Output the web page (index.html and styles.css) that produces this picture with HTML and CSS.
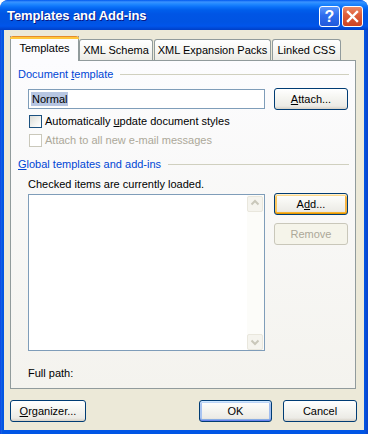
FILE: index.html
```html
<!DOCTYPE html>
<html>
<head>
<meta charset="utf-8">
<link rel="stylesheet" href="styles.css">
</head>
<body>
<div class="window">
  <div class="titlebar">
    <span class="title">Templates and Add-ins</span>
    <div class="tbtn help">?</div>
    <div class="tbtn close">
      <svg width="19" height="19" viewBox="0 0 19 19"><path d="M5 5 L14 14 M14 5 L5 14" stroke="#fff" stroke-width="2.4" stroke-linecap="square"/></svg>
    </div>
  </div>
  <div class="client">
    <div class="tabs">
      <div class="tab sel">Templates</div>
      <div class="tab t2">XML Schema</div>
      <div class="tab t3">XML Expansion Packs</div>
      <div class="tab t4">Linked CSS</div>
    </div>
    <div class="panel">
      <div class="group"><span>Document <u>t</u>emplate</span><i class="rule"></i></div>
      <div class="row-input">
        <div class="input"><span class="selected">Normal</span></div>
        <div class="btn attach"><span><u>A</u>ttach...</span></div>
      </div>
      <div class="check c1"><span class="box"></span><span>Automatically <u>u</u>pdate document styles</span></div>
      <div class="check c2 disabled"><span class="box"></span><span>Attach to all new e-mail messages</span></div>
      <div class="group g2"><span><u>G</u>lobal templates and add-ins</span><i class="rule"></i></div>
      <div class="note">Checked items are currently loaded.</div>
      <div class="row-list">
        <div class="list">
          <div class="sb">
            <div class="arrow"><svg width="14" height="14" viewBox="0 0 14 14"><polyline points="3.5,7.5 7,4 10.5,7.5" fill="none" stroke="#C9C7BA" stroke-width="2"/></svg></div>
            <div class="arrow"><svg width="14" height="14" viewBox="0 0 14 14"><polyline points="3.5,5.5 7,9 10.5,5.5" fill="none" stroke="#C9C7BA" stroke-width="2"/></svg></div>
          </div>
        </div>
        <div class="side">
          <div class="btn focus"><span>A<u>d</u>d...</span></div>
          <div class="btn disabled-btn remove"><span>Remove</span></div>
        </div>
      </div>
      <div class="fullpath">Full path:</div>
    </div>
    <div class="footer">
      <div class="btn organizer"><span><u>O</u>rganizer...</span></div>
      <div class="btn ok default"><span>OK</span></div>
      <div class="btn cancel"><span>Cancel</span></div>
    </div>
  </div>
</div>
</body>
</html>
```

FILE: styles.css
```css
html, body {
  margin: 0;
  padding: 0;
  background: #ffffff;
}
body {
  font-family: "Liberation Sans", Arial, sans-serif;
  font-size: 11px;
  color: #000;
}
.window {
  width: 368px;
  height: 434px;
  box-sizing: border-box;
  display: flex;
  flex-direction: column;
  background: linear-gradient(90deg, #0831D9 0, #166AEE 1px, #0855DD 2px, #0055E5 3px, #0055E5 364px, #0653DE 365px, #0846CF 367px);
  border-radius: 8px 8px 0 0;
  overflow: hidden;
}
.titlebar {
  height: 30px;
  flex: none;
  display: flex;
  align-items: flex-start;
  padding: 0 5px 0 7px;
  background: linear-gradient(180deg, #0058EE 0, #3A93FF 2px, #2088FF 4px, #0A70F8 7px, #005EEB 10px, #0055E5 14px, #0054E3 22px, #0055EB 26px, #004AD9 28px, #003FC6 30px);
  border-radius: 8px 8px 0 0;
}
.title {
  flex: 1;
  margin-top: 8px;
  line-height: 15px;
  font-size: 13px;
  font-weight: bold;
  color: #fff;
  text-shadow: 1px 1px 0 #0A1883;
  letter-spacing: -0.1px;
}
.tbtn {
  width: 21px;
  height: 21px;
  box-sizing: border-box;
  margin-top: 6px;
  border: 1px solid #fff;
  border-radius: 3px;
  display: flex;
  align-items: center;
  justify-content: center;
  color: #fff;
}
.help {
  margin-right: 2px;
  background: linear-gradient(180deg, #5C97FC 0, #2E6CEE 45%, #2259DB 100%);
  font-family: "Liberation Sans", Arial, sans-serif;
  font-weight: bold;
  font-size: 16px;
  line-height: 19px;
}
.close {
  background: linear-gradient(180deg, #EB8A68 0, #DF5F3B 40%, #CD4222 100%);
}
.client {
  flex: 1;
  margin: 0 4px 4px 4px;
  background: #ECE9D8;
  padding: 6px 0 0 6px;
  display: flex;
  flex-direction: column;
}
.tabs {
  display: flex;
  align-items: flex-end;
  height: 24px;
}
.tab {
  box-sizing: border-box;
  height: 21px;
  border: 1px solid #919B9C;
  border-bottom: none;
  border-radius: 3px 3px 0 0;
  background: linear-gradient(180deg, #FFFFFF 0, #F7F7F4 50%, #ECEBE5 100%);
  text-align: center;
  padding-top: 4px;
  line-height: 13px;
  white-space: nowrap;
}
.tab.sel {
  position: relative;
  z-index: 2;
  width: 69px;
  height: 25px;
  margin-bottom: -1px;
  border-top: none;
  border-radius: 0;
  background: #FCFCFE;
  padding-top: 6px;
}
.tab.sel::before {
  content: "";
  position: absolute;
  top: 0;
  left: -1px;
  right: -1px;
  height: 3px;
  border-radius: 3px 3px 0 0;
  background: linear-gradient(180deg, #E68B2C 0, #E68B2C 1px, #FFC73C 1px, #FFC73C 3px);
}
.t2 { width: 74px; }
.t3 { width: 117px; margin-left: 1px; }
.t4 { width: 69px; margin-left: 1px; }
.panel {
  position: relative;
  z-index: 1;
  width: 346px;
  height: 329px;
  box-sizing: border-box;
  border: 1px solid #919B9C;
  background: linear-gradient(180deg, #FCFCFE 0, #F4F3EE 100%);
  padding: 0 6px 0 7px;
  display: flex;
  flex-direction: column;
}
.group {
  display: flex;
  align-items: center;
  margin-top: 7px;
  line-height: 13px;
  height: 13px;
  color: #0046D5;
  white-space: nowrap;
}
.group.g2 { margin-top: 11px; }
.rule {
  flex: 1;
  height: 1px;
  background: #D0D0BF;
  margin-left: 7px;
}
.row-input {
  display: flex;
  align-items: center;
  margin: 7px 0 0 10px;
  height: 22px;
}
.input {
  width: 237px;
  height: 20px;
  box-sizing: border-box;
  border: 1px solid #7F9DB9;
  background: #fff;
  padding: 2px 0 0 2px;
}
.selected {
  display: inline-block;
  background: #B7C6E2;
  line-height: 14px;
  padding: 0 1px;
}
.btn {
  box-sizing: border-box;
  height: 22px;
  border: 1px solid #003C74;
  border-radius: 3px;
  background: linear-gradient(180deg, #FFFFFF 0, #F6F6F2 40%, #ECEBE6 85%, #D6D0C5 100%);
  display: flex;
  align-items: center;
  justify-content: center;
  line-height: 13px;
  white-space: nowrap;
}
.attach {
  width: 74px;
  margin-left: 9px;
}
.check {
  display: flex;
  align-items: center;
  gap: 3px;
  height: 13px;
  line-height: 13px;
  margin-left: 11px;
}
.check.c1 { margin-top: 5px; }
.check.c2 { margin-top: 6px; }
.box {
  width: 13px;
  height: 13px;
  box-sizing: border-box;
  border: 1px solid #1C5180;
  background: linear-gradient(135deg, #DCDCD7 0, #F4F4F1 60%, #FFFFFF 100%);
  flex: none;
}
.check.disabled { color: #ACA899; }
.check.disabled .box {
  border-color: #CAC8BB;
  background: #FFFFFF;
}
.note {
  margin: 7px 0 0 10px;
  line-height: 13px;
}
.row-list {
  display: flex;
  align-items: flex-start;
  margin: 2px 0 0 10px;
}
.list {
  width: 237px;
  height: 157px;
  box-sizing: border-box;
  margin-top: 1px;
  border: 1px solid #7F9DB9;
  background: #fff;
  display: flex;
  justify-content: flex-end;
}
.sb {
  width: 17px;
  background: #FCFCF9;
  display: flex;
  flex-direction: column;
  justify-content: space-between;
}
.arrow {
  width: 16px;
  height: 16px;
  box-sizing: border-box;
  margin: 1px 1px 0 0;
  border: 1px solid #E9E7DD;
  border-radius: 2px;
  background: #F5F4EE;
  display: flex;
  align-items: center;
  justify-content: center;
}
.arrow + .arrow { margin: 0 1px 0 0; }
.side {
  margin-left: 9px;
  display: flex;
  flex-direction: column;
}
.side .btn { width: 74px; }
.side .remove { margin-top: 8px; }
.focus {
  box-shadow: inset 0 1px 0 #FFF0CF, inset 0 2px 0 #FCD889, inset 0 -1px 0 #E59700, inset 0 -2px 0 #F8B330, inset 2px 0 0 #FBC761, inset -2px 0 0 #F5B444;
}
.disabled-btn {
  border-color: #C9C7BA;
  background: #F5F4EA;
  color: #ACA899;
}
.fullpath {
  margin: 16px 0 0 10px;
  line-height: 13px;
}
.footer {
  display: flex;
  width: 347px;
  margin-top: 11px;
}
.organizer { width: 76px; }
.ok {
  width: 73px;
  margin-left: auto;
}
.default {
  box-shadow: inset 0 1px 0 #CEE7FF, inset 0 2px 0 #BCD4F6, inset 0 -1px 0 #6982EE, inset 0 -2px 0 #89ADE4, inset 2px 0 0 #A9C4F1, inset -2px 0 0 #A0BDEF;
}
.cancel {
  width: 74px;
  margin-left: 11px;
}
```
